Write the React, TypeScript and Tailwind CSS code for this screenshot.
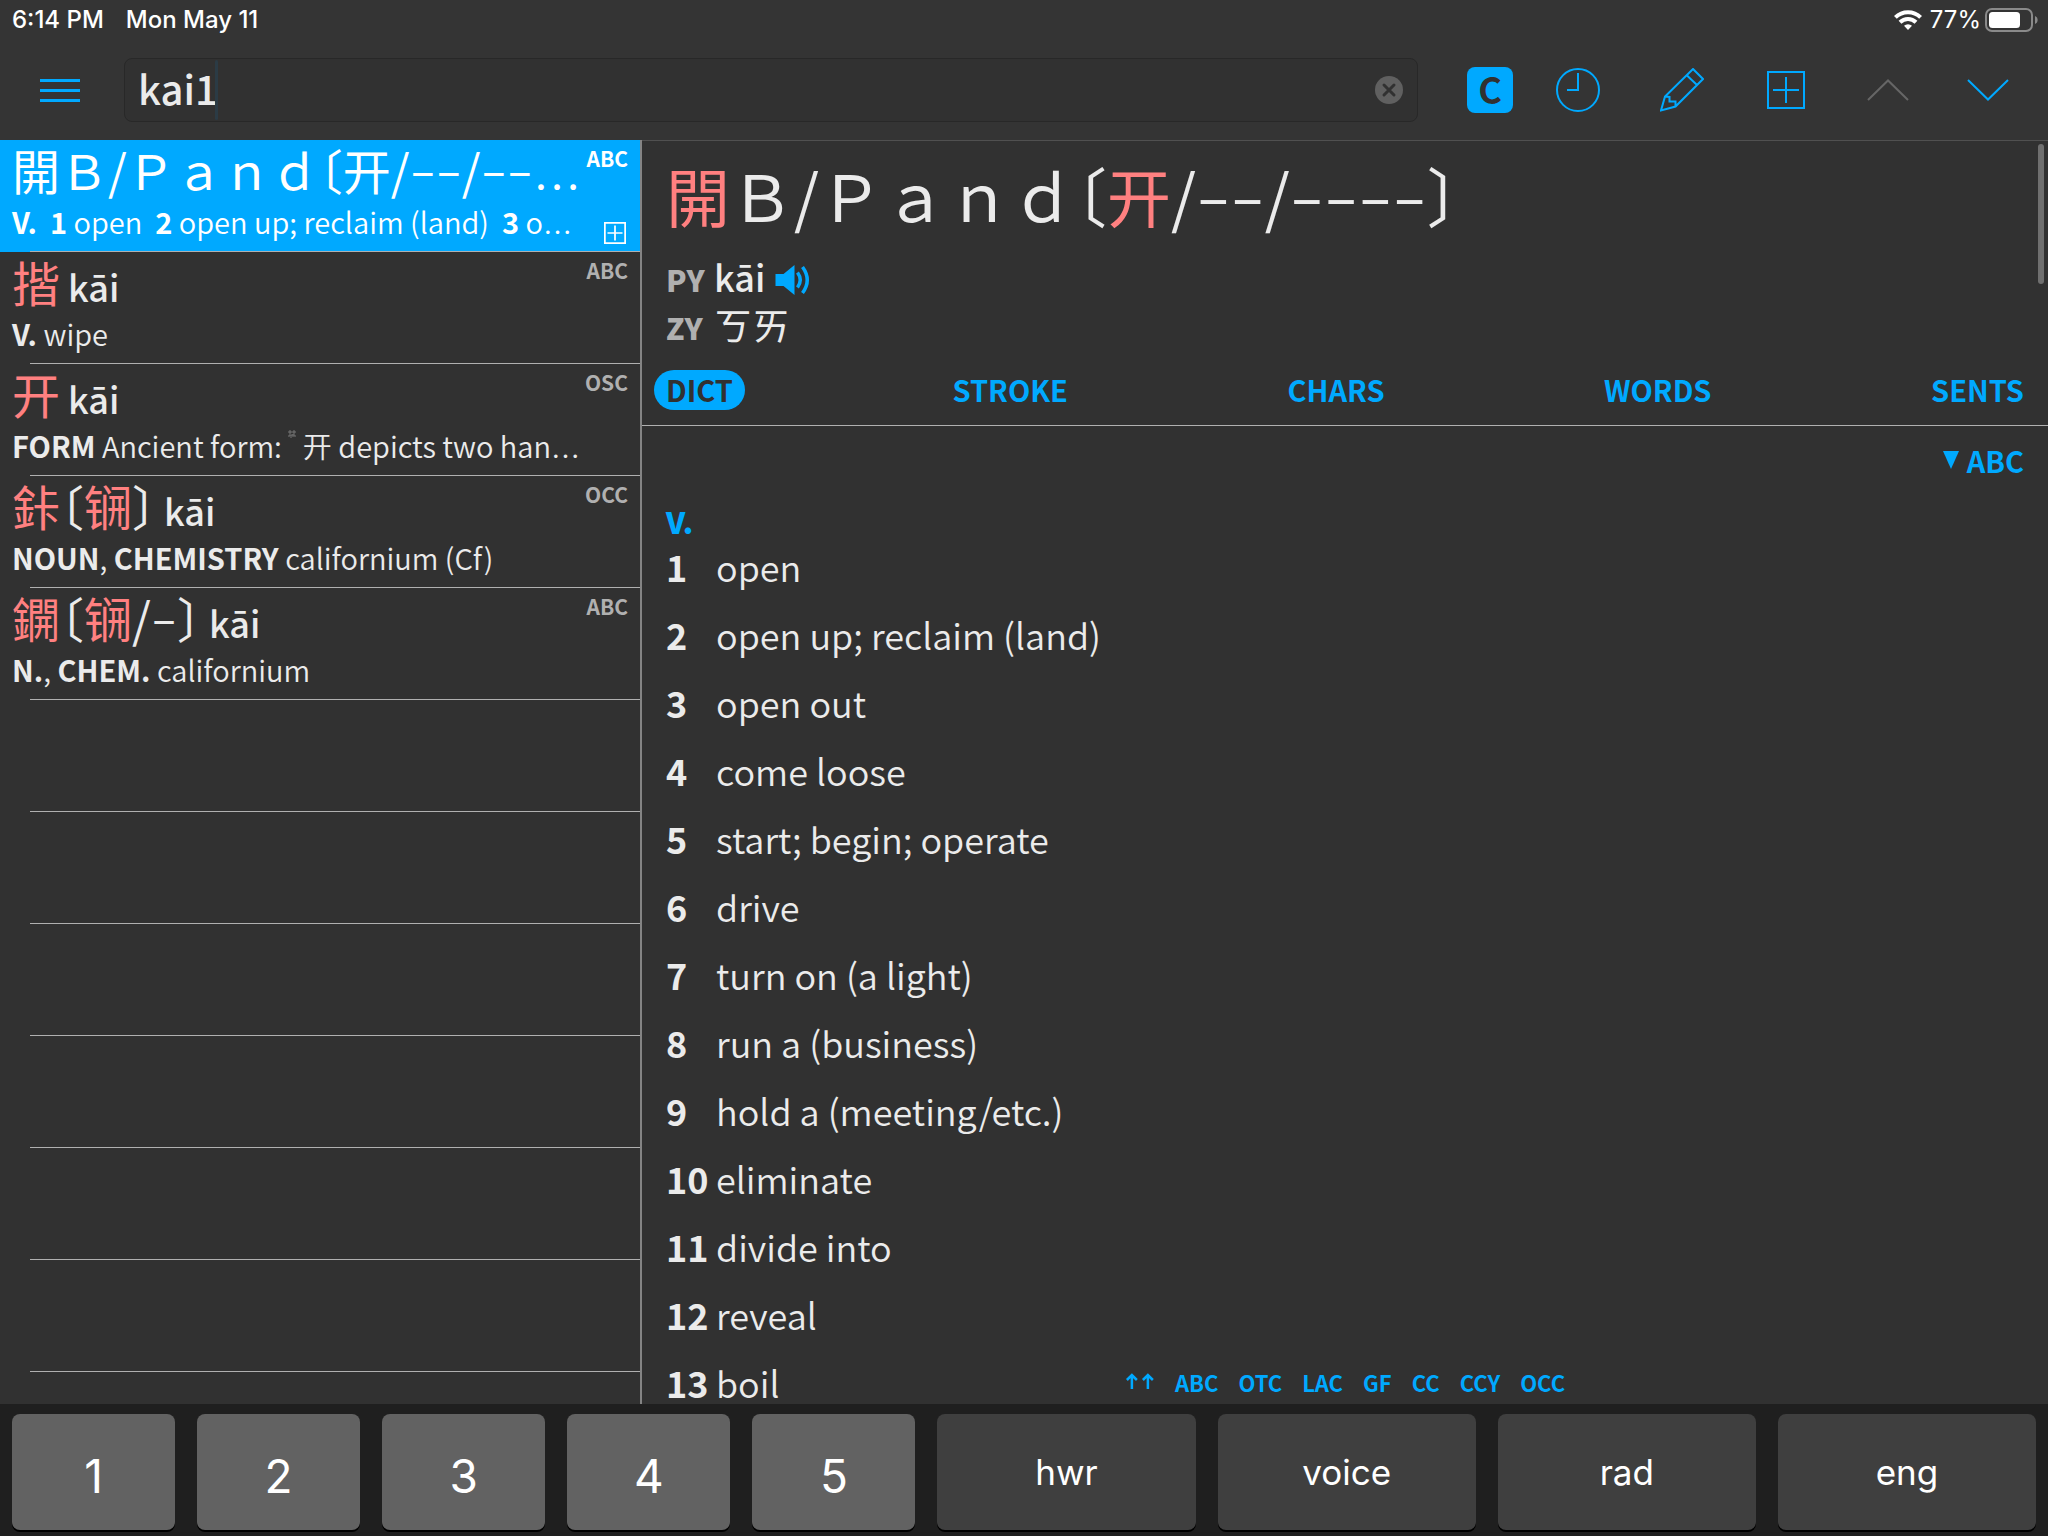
import { useState } from 'react'
import type { ReactNode } from 'react'

const entries: { title: ReactNode; py?: string; source: string; gloss: ReactNode; active?: boolean }[] = [
  {
    title: <>開Ｂ/Ｐａｎｄ〔开/<Dash n={2} />/<Dash n={2} /><Dots /></>,
    source: 'ABC',
    gloss: <><b>V.</b>&nbsp; <b>1</b> open&nbsp; <b>2</b> open up; reclaim (land)&nbsp; <b>3</b> o<Dots /></>,
    active: true,
  },
  { title: <Red>揩</Red>, py: 'kāi', source: 'ABC', gloss: <><b>V.</b> wipe</> },
  {
    title: <Red>开</Red>,
    py: 'kāi',
    source: 'OSC',
    gloss: <><b>FORM</b> Ancient form: <OldForm /> 开 depicts two han<Dots /></>,
  },
  {
    title: <><Red>鉲</Red>〔<Red>锎</Red>〕</>,
    py: 'kāi',
    source: 'OCC',
    gloss: <><b>NOUN</b>, <b>CHEMISTRY</b> californium (Cf)</>,
  },
  {
    title: <><Red>鐦</Red>〔<Red>锎</Red>/<Dash n={1} />〕</>,
    py: 'kāi',
    source: 'ABC',
    gloss: <><b>N.</b>, <b>CHEM.</b> californium</>,
  },
]

const senses = [
  'open', 'open up; reclaim (land)', 'open out', 'come loose', 'start; begin; operate', 'drive',
  'turn on (a light)', 'run a (business)', 'hold a (meeting/etc.)', 'eliminate', 'divide into', 'reveal', 'boil',
]

const tabs = ['DICT', 'STROKE', 'CHARS', 'WORDS', 'SENTS']
const sources = ['ABC', 'OTC', 'LAC', 'GF', 'CC', 'CCY', 'OCC']
const numberKeys = ['1', '2', '3', '4', '5']
const modeKeys = ['hwr', 'voice', 'rad', 'eng']

function Red({ children }: { children: ReactNode }) {
  return <span className="text-[#ff8080]">{children}</span>
}

// stands for a character that is unchanged in the simplified form
function Dash({ n, large }: { n: number; large?: boolean }) {
  return (
    <span className={`font-['Lato',sans-serif] leading-none ${large ? 'text-[59px]' : 'text-[45px]'}`}>
      {'−'.repeat(n)}
    </span>
  )
}

// the CJK face centres its ellipsis, this one keeps it on the baseline
function Dots() {
  return <span className="font-['Liberation_Serif',serif] leading-none">…</span>
}

function OldForm() {
  return (
    <svg className="inline-block h-2 w-2 -translate-y-4" viewBox="0 0 8 8" fill="none" stroke="#777" aria-hidden="true">
      <path d="M1 1h2v2H1zM5 1h2v2H5zM1 7V5h6v2M3 5v3M5 4v3" />
    </svg>
  )
}

function PlusBox({ className, stroke }: { className: string; stroke: number }) {
  return (
    <svg className={className} viewBox="0 0 38 38" fill="none" stroke="currentColor" strokeWidth={stroke} aria-hidden="true">
      <path d={`M${stroke / 2} ${stroke / 2}H${38 - stroke / 2}V${38 - stroke / 2}H${stroke / 2}ZM19 6V32M6 19H32`} />
    </svg>
  )
}

function StatusBar() {
  return (
    <div className="flex h-10 items-center justify-between pr-2.5 pl-3 font-['Inter',sans-serif] text-[24px] text-white">
      <div className="flex gap-[22px] font-medium">
        <span>6:14 PM</span>
        <span>Mon May 11</span>
      </div>
      <div className="flex items-center gap-1">
        <svg className="mr-1 h-5 w-7" viewBox="0 0 28 20" fill="none" stroke="#fff" strokeWidth="4" aria-hidden="true">
          <path d="M1.400 7.400a18 18 0 0 1 25.200 0M6 12.200a11.500 11.500 0 0 1 16 0" />
          <path d="M14 20l-4-4.200a5.800 5.800 0 0 1 8 0z" fill="#fff" stroke="none" />
        </svg>
        <span>77%</span>
        <svg className="h-6 w-[53px]" viewBox="0 0 53 24" fill="none" aria-hidden="true">
          <rect x="1" y="1" width="46" height="22" rx="6" stroke="#8a8a8a" strokeWidth="2" />
          <rect x="4" y="4" width="31" height="16" rx="3.500" fill="#fff" />
          <path d="M50 8c3.500 1.200 3.500 6.800 0 8z" fill="#8a8a8a" />
        </svg>
      </div>
    </div>
  )
}

function Toolbar() {
  const [query, setQuery] = useState('kai1')

  return (
    <div className="flex h-[100px] items-center pr-[39px] pl-10 text-[#00a9ff]">
      <button aria-label="Menu" className="flex w-10 flex-col gap-[7px]">
        <span className="h-[3px] bg-[#00a9ff]" />
        <span className="h-[3px] bg-[#00a9ff]" />
        <span className="h-[3px] bg-[#00a9ff]" />
      </button>
      <div className="ml-11 flex h-16 flex-1 items-center rounded-lg border border-[#282828] bg-[#313131] pr-3.5 pl-[13px]">
        <div className="relative flex-1">
          <input
            aria-label="Search"
            className="h-[60px] w-full bg-transparent pb-1 text-[40px] font-medium text-[#ebebeb] outline-none"
            value={query}
            onChange={e => setQuery(e.target.value)}
          />
          <span className="absolute top-0 left-[77px] h-[60px] w-[3px] rounded bg-[#2b3b45]" />
        </div>
        <button aria-label="Clear">
          <svg className="size-7" viewBox="0 0 28 28" aria-hidden="true">
            <circle cx="14" cy="14" r="14" fill="#606060" />
            <path d="M9 9l10 10M19 9L9 19" stroke="#313131" strokeWidth="3" strokeLinecap="round" />
          </svg>
        </button>
      </div>
      <button className="ml-[49px] flex size-[46px] items-center justify-center rounded-lg bg-[#00a9ff] pb-1 text-[36px] leading-none font-bold text-[#313131]">
        C
      </button>
      <button aria-label="History" className="ml-[43px]">
        <svg className="size-11" viewBox="0 0 44 44" fill="none" stroke="currentColor" strokeWidth="2" aria-hidden="true">
          <circle cx="22" cy="22" r="21" />
          <path d="M22 5V22H11" />
        </svg>
      </button>
      <button aria-label="Handwriting" className="ml-[60px]">
        <svg className="size-11" viewBox="0 0 44 44" fill="none" stroke="currentColor" strokeWidth="2" aria-hidden="true">
          <path d="M33 1L43 11L15.500 38.500L1 42.500L5 28.500ZM27 7.500L37 17M5 28.500L9.500 29V33.500H15.500V38.500" />
        </svg>
      </button>
      <button aria-label="Add to flashcards" className="ml-[63px]">
        <PlusBox className="size-[38px]" stroke={2} />
      </button>
      <button aria-label="Previous" className="ml-[62px] text-[#666]">
        <svg className="h-[22px] w-[42px]" viewBox="0 0 42 22" fill="none" stroke="currentColor" strokeWidth="2" aria-hidden="true">
          <path d="M1 21L21 1.500L41 21" />
        </svg>
      </button>
      <button aria-label="Next" className="ml-[58px]">
        <svg className="h-[22px] w-[42px]" viewBox="0 0 42 22" fill="none" stroke="currentColor" strokeWidth="2" aria-hidden="true">
          <path d="M1 1L21 20.500L41 1" />
        </svg>
      </button>
    </div>
  )
}

function ResultList() {
  return (
    <div className="w-[642px] shrink-0 overflow-hidden border-r-2 border-[#848484]">
      {entries.map((entry, i) => (
        <div
          key={i}
          className={`relative h-28 pl-3 ${entry.active ? 'bg-[#00a9ff] text-white' : 'text-[#ebebeb]'}`}
        >
          <div className="flex h-[61px] justify-between pr-3">
            <div className="text-[48px] leading-[58px] whitespace-nowrap [font-feature-settings:'halt']">
              {entry.title}
              {entry.py && <span className="pl-2 text-[36px] leading-none font-medium">{entry.py}</span>}
            </div>
            <span className={`pt-1 text-[21px] leading-7 font-bold ${entry.active ? '' : 'text-[#b0b0b0]'}`}>
              {entry.source}
            </span>
          </div>
          <div className="text-[29px] leading-10 font-[350] whitespace-nowrap">{entry.gloss}</div>
          {entry.active && <PlusBox className="absolute right-3.5 bottom-2 size-[22px]" stroke={3} />}
          <div className="absolute right-0 bottom-0 left-[30px] h-px bg-[#b0b0b0]" />
        </div>
      ))}
      {Array.from({ length: 7 }, (_, i) => (
        <div key={i} className="ml-[30px] h-28 border-b border-[#b0b0b0]" />
      ))}
    </div>
  )
}

function Entry() {
  return (
    <div className="relative flex min-w-0 flex-1 flex-col overflow-hidden border-t border-[#505050] text-[#ebebeb]">
      <div className="pl-6">
        <h1 className="h-[111px] text-[64px] leading-[106px] whitespace-nowrap [font-feature-settings:'halt']">
          <Red>開</Red>Ｂ/Ｐａｎｄ〔<Red>开</Red>/<Dash n={2} large />/<Dash n={4} large />〕
        </h1>
        <div className="flex h-12 items-baseline">
          <span className="w-12 text-[30px] font-black text-[#b0b0b0] [font-kerning:none]">PY</span>
          <span className="text-[36px] leading-[48px] font-medium">kāi</span>
          <button aria-label="Play pronunciation" className="ml-2.5 self-center pt-2 text-[#00a9ff]">
            <svg className="h-[30px] w-[37px]" viewBox="0 0 36 30" fill="none" stroke="currentColor" strokeWidth="3.500" aria-hidden="true">
              <path d="M0 9H8L19 0V30L8 21H0Z" fill="currentColor" stroke="none" />
              <path d="M22 7.500Q27.500 15 22 22.500M27 2Q36.500 15 27 28" />
            </svg>
          </button>
        </div>
        <div className="flex h-12 items-baseline">
          <span className="w-12 text-[30px] font-black text-[#b0b0b0] [font-kerning:none]">ZY</span>
          <span className="text-[38px] leading-[48px]">ㄎㄞ</span>
        </div>
      </div>
      <div className="mt-[22px] flex h-14 shrink-0 items-start justify-between border-b border-[#b0b0b0] pr-6 pl-3">
        {tabs.map((tab, i) => (
          <button
            key={tab}
            className={`h-10 pb-0.5 text-[29px] leading-[38px] font-bold ${i === 0 ? '-mr-3 rounded-full bg-[#00a9ff] px-3 text-[#313131]' : 'text-[#00a9ff]'}`}
          >
            {tab}
          </button>
        ))}
      </div>
      <div className="flex h-[67px] shrink-0 items-center justify-end gap-2 pr-6 text-[29px] leading-10 font-bold text-[#00a9ff]">
        <svg className="h-[18px] w-4" viewBox="0 0 16 18" fill="currentColor" aria-hidden="true">
          <path d="M0 0H16L8 18Z" />
        </svg>
        ABC
      </div>
      <div className="pl-6">
        <div className="mt-2 h-[39px] text-[30px] leading-10 font-black text-[#00a9ff]">V.</div>
        <ol>
          {senses.map((sense, i) => (
            <li key={sense} className="flex h-[68px] items-start text-[36px] leading-[52px]">
              <span className="w-[50px] shrink-0 font-bold">{i + 1}</span>
              <span className="font-[350]">{sense}</span>
            </li>
          ))}
        </ol>
      </div>
      <div className="absolute bottom-[7px] left-1/2 flex -translate-x-1/2 gap-5 text-[22px] leading-[30px] font-bold text-[#00a9ff]">
        <svg className="mt-1.5 h-4 w-[30px]" viewBox="0 0 30 16" fill="none" stroke="currentColor" strokeWidth="2.500" aria-hidden="true">
          <path d="M7 16V2M2 7L7 2L12 7M23 16V2M18 7L23 2L28 7" />
        </svg>
        {sources.map(s => <a key={s} href={`#${s}`}>{s}</a>)}
      </div>
      <div className="absolute top-[3px] right-1 h-[140px] w-1.5 rounded-full bg-[#6f6f6f]" />
    </div>
  )
}

function Keyboard() {
  return (
    <div className="flex h-[132px] gap-[22px] bg-[#1f1f1f] px-3 pt-2.5 pb-1.5 font-['Inter',sans-serif] text-white">
      {numberKeys.map(k => (
        <button key={k} className="h-[116px] flex-[163] rounded-lg bg-[#626262] pt-2 text-[46px] shadow-[0_2px_0_#000]">
          {k}
        </button>
      ))}
      {modeKeys.map(k => (
        <button key={k} className="h-[116px] flex-[258] rounded-lg bg-[#3f3f3f] text-[35px] shadow-[0_2px_0_#000]">
          {k}
        </button>
      ))}
    </div>
  )
}

export default function App() {
  return (
    <div className="flex h-screen flex-col overflow-hidden bg-[#313131] font-['Noto_Sans_CJK_SC',sans-serif]">
      <header className="bg-[#343434]">
        <StatusBar />
        <Toolbar />
      </header>
      <main className="flex min-h-0 flex-1">
        <ResultList />
        <Entry />
      </main>
      <Keyboard />
    </div>
  )
}
